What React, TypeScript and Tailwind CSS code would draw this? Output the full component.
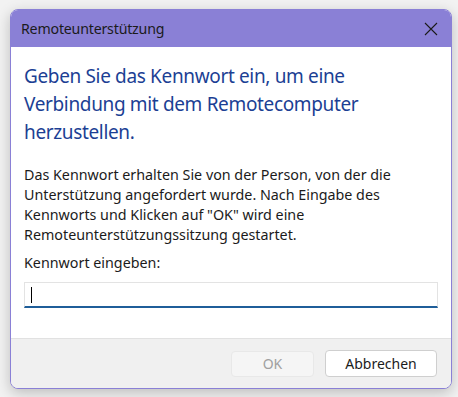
import React from "react";

const App: React.FC = () => {
  return (
    <div
      className="w-[458px] h-[397px] bg-[#f2f2f2] pl-[10px] pt-[9px]"
      style={{ fontFamily: '"Noto Sans", "Open Sans", sans-serif' }}
    >
      <div className="w-[442px] h-[380px] flex flex-col rounded-[8px] border border-[#8a80d6] bg-white overflow-hidden shadow-[0_4px_14px_rgba(0,0,0,0.22)]">
        {/* title bar */}
        <div className="h-[37px] flex items-center justify-between bg-[#8a80d6] pl-[10px] pr-[12px] shrink-0">
          <span className="text-[14.2px] text-[#1b1b1b] tracking-[-0.2px]">Remoteunterstützung</span>
          <svg width="16" height="16" viewBox="0 0 16 16" className="text-[#1b1b1b]">
            <path d="M2 2 L14 14 M14 2 L2 14" stroke="currentColor" strokeWidth="1.1" fill="none" />
          </svg>
        </div>

        {/* content */}
        <div className="flex-1 flex flex-col px-[13px] pt-[15px]">
          <h1 className="text-[19px] leading-[28px] text-[#1c3f94] pr-[40px] tracking-[-0.35px]">
            Geben Sie das Kennwort ein, um eine Verbindung mit dem Remotecomputer herzustellen.
          </h1>
          <p className="mt-[19px] text-[14.3px] leading-[20px] text-[#1b1b1b] pr-[40px] tracking-[0px]">
            Das Kennwort erhalten Sie von der Person, von der die Unterstützung angefordert wurde. Nach Eingabe des
            Kennworts und Klicken auf "OK" wird eine Remoteunterstützungssitzung gestartet.
          </p>
          <label className="mt-[8px] text-[14.3px] leading-[20px] text-[#1b1b1b]">
            Kennwort eingeben:
          </label>
          <div className="mt-[9px] h-[26px] border border-[#e3e3e3] border-b-2 border-b-[#1f5e99] flex items-center pl-[6px]">
            <div className="w-[1px] h-[16px] bg-black" />
          </div>
        </div>

        {/* footer */}
        <div className="h-[50px] shrink-0 bg-[#f0f0f0] border-t border-[#e1e1e1] flex items-center justify-end gap-[11px] pr-[14px]">
          <button className="w-[83px] h-[26px] rounded-[4px] bg-[#f5f5f5] border border-[#e8e8e8] text-[14px] text-[#a0a0a0]">
            OK
          </button>
          <button className="w-[112px] h-[27px] rounded-[4px] bg-white border border-[#cfcfcf] text-[14px] text-[#1b1b1b]">
            Abbrechen
          </button>
        </div>
      </div>
    </div>
  );
};

export default App;
